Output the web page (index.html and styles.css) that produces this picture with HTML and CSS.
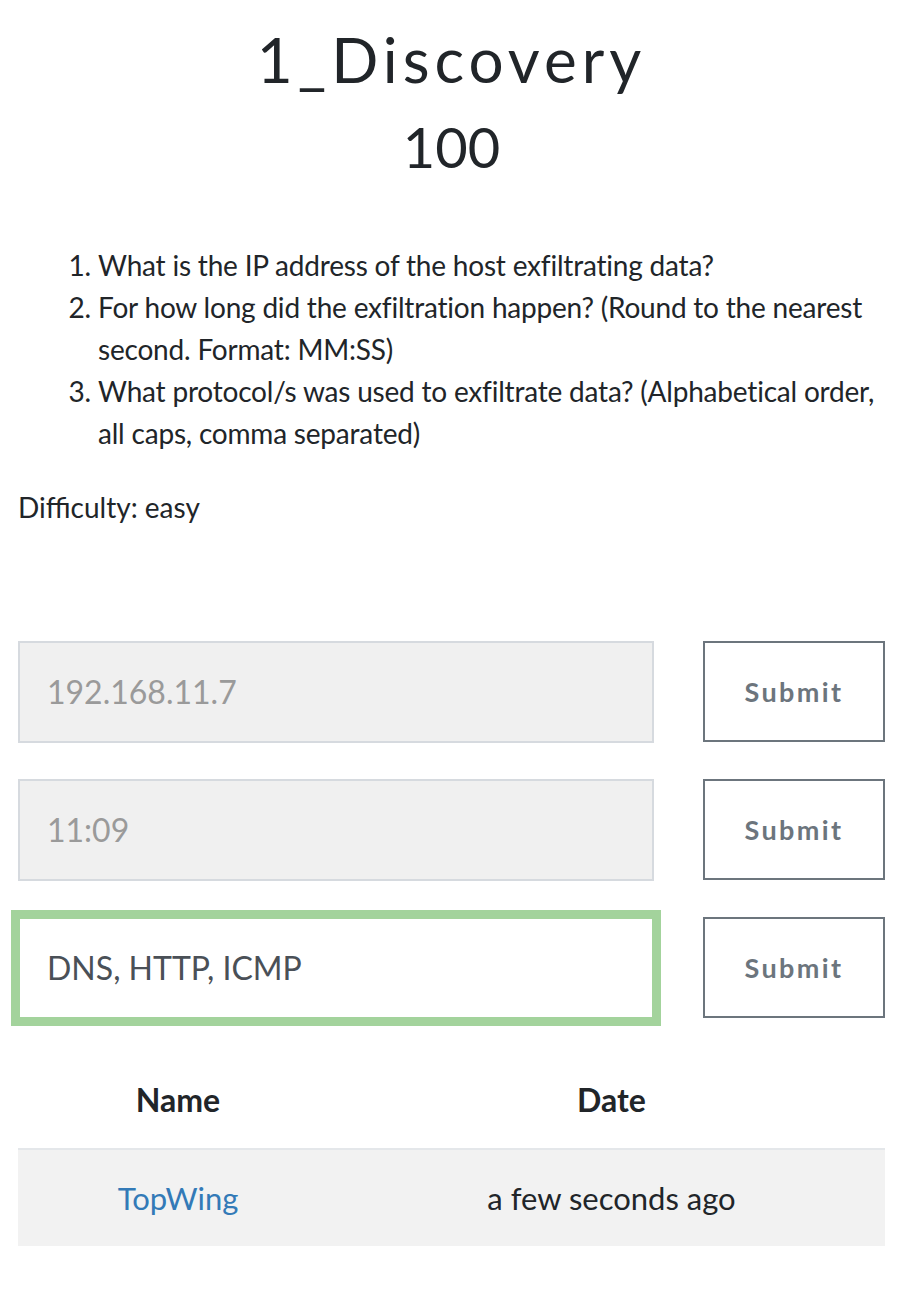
FILE: index.html
```html
<!DOCTYPE html>
<html lang="en">
<head>
<meta charset="utf-8">
<title>1_Discovery</title>
<link rel="stylesheet" href="styles.css">
</head>
<body>
<div class="challenge">
  <h3 class="challenge-name">1_Discovery</h3>
  <h4 class="challenge-value">100</h4>
  <ol class="questions">
    <li>What is the IP address of the host exfiltrating data?</li>
    <li>For how long did the exfiltration happen? (Round to the nearest second. Format: MM:SS)</li>
    <li>What protocol/s was used to exfiltrate data? (Alphabetical order, all caps, comma separated)</li>
  </ol>
  <p class="difficulty">Difficulty: easy</p>

  <div class="answers">
    <div class="answer-row">
      <input class="answer-input solved" type="text" value="192.168.11.7" readonly>
      <button class="submit-btn" type="button">Submit</button>
    </div>
    <div class="answer-row">
      <input class="answer-input solved" type="text" value="11:09" readonly>
      <button class="submit-btn" type="button">Submit</button>
    </div>
    <div class="answer-row">
      <input class="answer-input correct" type="text" value="DNS, HTTP, ICMP">
      <button class="submit-btn" type="button">Submit</button>
    </div>
  </div>

  <table class="solves">
    <thead>
      <tr><th class="col-name">Name</th><th class="col-date">Date</th></tr>
    </thead>
    <tbody>
      <tr><td class="col-name"><a href="#" class="solver">TopWing</a></td><td class="col-date">a few seconds ago</td></tr>
    </tbody>
  </table>
</div>
</body>
</html>
```

FILE: styles.css
```css
html, body {
  margin: 0;
  padding: 0;
  background: #ffffff;
}

body {
  font-family: Lato, "Noto Sans", sans-serif;
  color: #212529;
}

.challenge {
  width: 867px;
  margin-left: 18px;
  padding-top: 22px;
}

.challenge-name {
  margin: 0;
  text-align: center;
  font-family: Lato, "Noto Sans", sans-serif;
  font-weight: 400;
  font-size: 62px;
  line-height: 1.2;
  letter-spacing: 5px;
  color: #212529;
}

.challenge-value {
  margin: 17px 0 0;
  text-align: center;
  font-weight: 400;
  font-size: 56px;
  line-height: 1.2;
  color: #212529;
}

.questions {
  margin: 63px 0 0;
  padding-left: 80px;
  font-size: 28px;
  line-height: 42px;
  letter-spacing: -0.2px;
}

.difficulty {
  margin: 32px 0 0;
  font-size: 28px;
  line-height: 42px;
}

.answers {
  margin-top: 113px;
}

.answer-row {
  display: flex;
  align-items: flex-start;
  gap: 49px;
  margin-bottom: 36px;
}

.answer-input {
  box-sizing: border-box;
  width: 636px;
  height: 102px;
  padding: 0 27px;
  font-family: Lato, "Noto Sans", sans-serif;
  font-size: 32px;
  border: 2px solid #d6dadf;
  border-radius: 0;
  outline: none;
  margin: 0;
}

.answer-input.solved {
  background: #f0f0f0;
  color: #9a9a9a;
}

.answer-input.correct {
  background: #ffffff;
  color: #4a5057;
  border-color: #a3d39c;
  box-shadow: 0 0 0 7px #a3d39c;
}

.submit-btn {
  box-sizing: border-box;
  width: 182px;
  height: 101px;
  margin: 0;
  background: #ffffff;
  border: 2px solid #6c757d;
  border-radius: 0;
  color: #6c757d;
  font-family: Lato, "Noto Sans", sans-serif;
  font-weight: 700;
  font-size: 27px;
  letter-spacing: 2.4px;
  cursor: pointer;
}

.solves {
  width: 867px;
  margin-top: 2px;
  border-collapse: collapse;
  font-size: 31px;
  line-height: 42px;
}

.solves th {
  font-weight: 700;
  font-size: 32px;
  padding: 24px 0 27px;
  border-bottom: 2px solid #e4e7ea;
  text-align: center;
}

.solves td {
  background: #f2f2f2;
  padding: 27px 0 27px;
  text-align: center;
}

.col-name {
  width: 320px;
}

.solver {
  color: #337ab7;
  text-decoration: none;
}
```
